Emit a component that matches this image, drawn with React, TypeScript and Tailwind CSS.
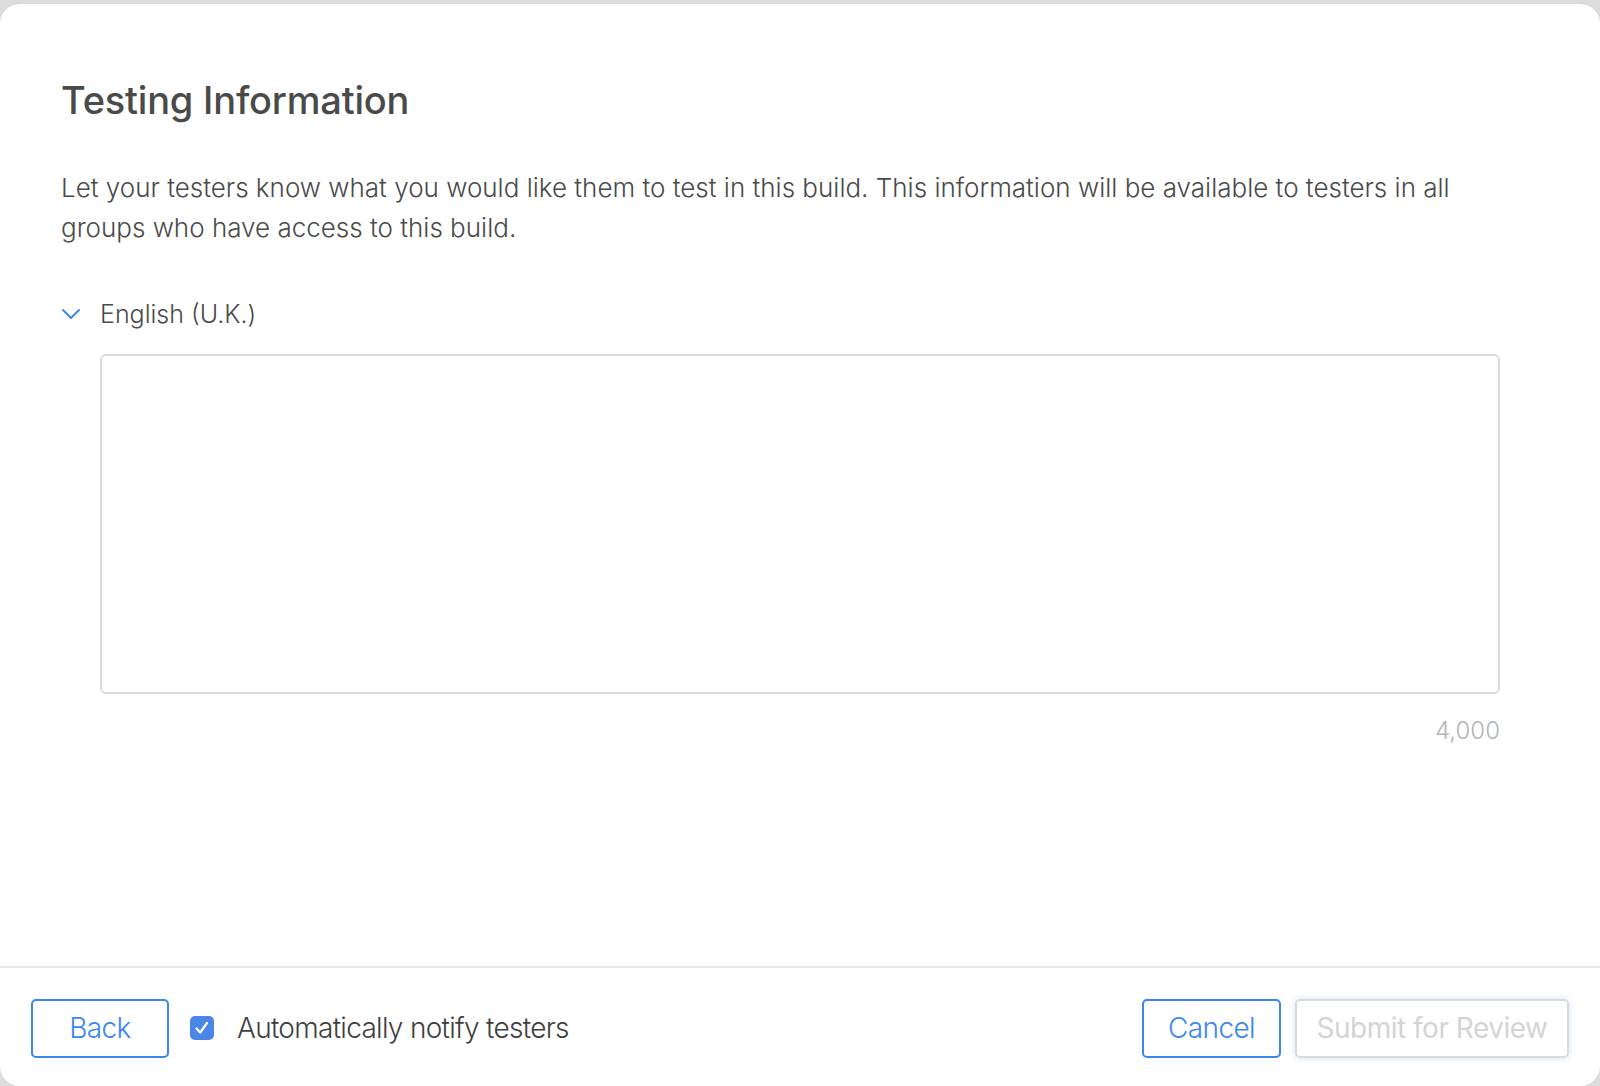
import React from "react";

export default function App() {
  return (
    <div
      className="w-[1600px] h-[1086px] bg-[#dcdcdc] pt-[4px] overflow-hidden"
      style={{ fontFamily: "Inter, 'Noto Sans', sans-serif" }}
    >
      <div className="w-full h-[1082px] bg-white rounded-[20px] flex flex-col">
        <div className="flex-1 pl-[61px] pr-[100px] pt-[74px]">
          <h1 className="text-[38px] leading-[44px] font-medium text-[#4a4a4a] tracking-[-0.2px]">
            Testing Information
          </h1>
          <p className="mt-[46px] text-[26px] leading-[40px] font-light text-[#4a4a4a] tracking-[0px]">
            Let your testers know what you would like them to test in this build. This information will be available to testers in all groups who have access to this build.
          </p>
          <div className="mt-[50px] flex items-center h-[32px]">
            <svg width="20" height="12" viewBox="0 0 20 12">
              <path d="M2 2 L10 10 L18 2" fill="none" stroke="#3b87f0" strokeWidth="2" strokeLinecap="round" strokeLinejoin="round" />
            </svg>
            <span className="ml-[19px] text-[25px] leading-[32px] font-light text-[#4a4a4a] tracking-[0px]">
              English (U.K.)
            </span>
          </div>
          <div className="ml-[39px] mt-[24px] h-[340px] border-2 border-[#dadada] rounded-[6px]" />
          <div className="ml-[39px] mt-[21px] flex justify-end h-[32px]">
            <span className="text-[24px] leading-[32px] font-light text-[#b4b4b4] tracking-[0px]">4,000</span>
          </div>
        </div>
        <div className="h-[120px] border-t-2 border-[#e8e8e8] flex items-center px-[31px] pt-[2px]">
          <button className="w-[138px] h-[59px] border-2 border-[#3b87f0] rounded-[5px] text-[#3b87f0] text-[28px] font-light tracking-[-0.6px]">
            Back
          </button>
          <div className="ml-[21px] w-[24px] h-[24px] rounded-[5px] bg-[#4a86e8] flex items-center justify-center">
            <svg width="24" height="24" viewBox="0 0 24 24">
              <path d="M6.5 12.5 L10.2 16.5 L17 7" fill="none" stroke="white" strokeWidth="2.2" strokeLinecap="round" strokeLinejoin="round" />
            </svg>
          </div>
          <span className="ml-[23px] text-[28px] font-light text-[#3f3f3f] tracking-[-0.7px]">
            Automatically notify testers
          </span>
          <div className="flex-1" />
          <button className="w-[139px] h-[59px] border-2 border-[#3b87f0] rounded-[5px] text-[#3b87f0] text-[28px] font-light tracking-[-0.6px]">
            Cancel
          </button>
          <button className="ml-[14px] w-[274px] h-[59px] border-2 border-[#dadada] rounded-[5px] text-[#d4d4d4] text-[28px] font-normal tracking-[-0.5px] shadow-[0_0_6px_rgba(59,135,240,0.25)]">
            Submit for Review
          </button>
        </div>
      </div>
    </div>
  );
}
